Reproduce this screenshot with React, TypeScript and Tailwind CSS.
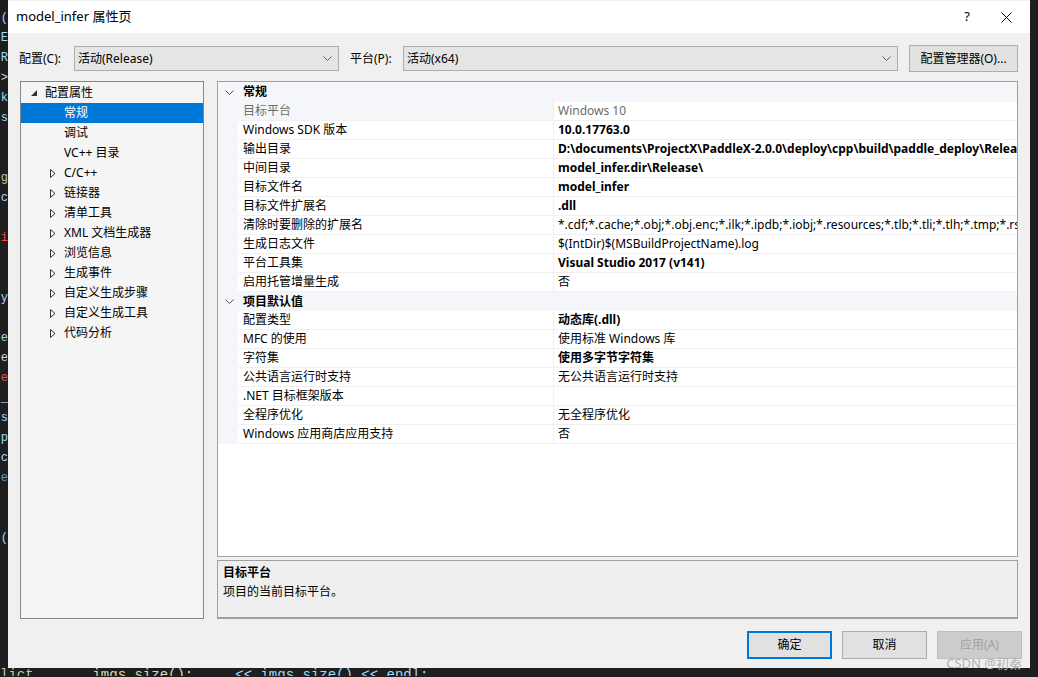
import React from "react";

const FONT = { fontFamily: '"Noto Sans", "Noto Sans CJK SC", sans-serif' };

type Prop = { label: string; value: string; bold?: boolean; disabled?: boolean; selected?: boolean };

const general: Prop[] = [
	{ label: "目标平台", value: "Windows 10", disabled: true, selected: true },
	{ label: "Windows SDK 版本", value: "10.0.17763.0", bold: true },
	{ label: "输出目录", value: "D:\\documents\\ProjectX\\PaddleX-2.0.0\\deploy\\cpp\\build\\paddle_deploy\\Release\\", bold: true },
	{ label: "中间目录", value: "model_infer.dir\\Release\\", bold: true },
	{ label: "目标文件名", value: "model_infer", bold: true },
	{ label: "目标文件扩展名", value: ".dll", bold: true },
	{ label: "清除时要删除的扩展名", value: "*.cdf;*.cache;*.obj;*.obj.enc;*.ilk;*.ipdb;*.iobj;*.resources;*.tlb;*.tli;*.tlh;*.tmp;*.rsp;*.pgc;*.pgd" },
	{ label: "生成日志文件", value: "$(IntDir)$(MSBuildProjectName).log" },
	{ label: "平台工具集", value: "Visual Studio 2017 (v141)", bold: true },
	{ label: "启用托管增量生成", value: "否" },
];

const defaults: Prop[] = [
	{ label: "配置类型", value: "动态库(.dll)", bold: true },
	{ label: "MFC 的使用", value: "使用标准 Windows 库" },
	{ label: "字符集", value: "使用多字节字符集", bold: true },
	{ label: "公共语言运行时支持", value: "无公共语言运行时支持" },
	{ label: ".NET 目标框架版本", value: "" },
	{ label: "全程序优化", value: "无全程序优化" },
	{ label: "Windows 应用商店应用支持", value: "否" },
];

const treeChildren: { label: string; expandable: boolean; selected?: boolean }[] = [
	{ label: "常规", expandable: false, selected: true },
	{ label: "调试", expandable: false },
	{ label: "VC++ 目录", expandable: false },
	{ label: "C/C++", expandable: true },
	{ label: "链接器", expandable: true },
	{ label: "清单工具", expandable: true },
	{ label: "XML 文档生成器", expandable: true },
	{ label: "浏览信息", expandable: true },
	{ label: "生成事件", expandable: true },
	{ label: "自定义生成步骤", expandable: true },
	{ label: "自定义生成工具", expandable: true },
	{ label: "代码分析", expandable: true },
];

function Chevron({ color = "#606060" }: { color?: string }) {
	return (
		<svg width="9" height="5" viewBox="0 0 9 5" className="shrink-0">
			<path d="M0.5 0.5 L4.5 4.5 L8.5 0.5" fill="none" stroke={color} strokeWidth="1" />
		</svg>
	);
}

function Select({ value, width }: { value: string; width: string }) {
	return (
		<div className={`${width} h-[25px] border border-[#adadad] bg-[#e5e5e5] flex items-center pl-[3px] pr-[6px]`}>
			<span className="flex-1 text-[12px] text-black">{value}</span>
			<Chevron />
		</div>
	);
}

function Category({ title, tall }: { title: string; tall?: boolean }) {
	return (
		<div className={`flex ${tall ? "h-[20px]" : "h-[19px]"} bg-[#f4f6f9] items-center shrink-0`}>
			<div className="w-[20px] flex justify-center pl-[2px]">
				<Chevron color="#555555" />
			</div>
			<span className="pl-[5px] text-[12px] font-bold text-black">{title}</span>
		</div>
	);
}

function Row({ p }: { p: Prop }) {
	return (
		<div className="flex h-[19px] shrink-0">
			<div className="w-[20px] bg-[#f4f6f9] shrink-0" />
			<div
				className={`w-[316px] shrink-0 border-b border-r border-[#f0f0f0] pl-[5px] flex items-center text-[12px] whitespace-nowrap ${
					p.selected ? "bg-[#f4f6f9]" : "bg-white"
				} ${p.disabled ? "text-[#6d6d6d]" : "text-black"}`}
			>
				{p.label}
			</div>
			<div
				className={`flex-1 min-w-0 overflow-hidden border-b border-[#f0f0f0] pl-[4px] flex items-center text-[12px] whitespace-nowrap bg-white ${
					p.disabled ? "text-[#6d6d6d]" : "text-black"
				} ${p.bold ? "font-bold" : ""}`}
			>
				{p.value}
			</div>
		</div>
	);
}

function Button({ label, variant }: { label: string; variant: "default" | "normal" | "disabled" }) {
	const cls =
		variant === "default"
			? "border-2 border-[#0078d7] bg-[#e1e1e1] text-black"
			: variant === "normal"
			? "border border-[#adadad] bg-[#e1e1e1] text-black"
			: "border border-[#bfbfbf] bg-[#cccccc] text-[#a0a0a0]";
	return <div className={`w-[85px] h-[28px] flex items-center justify-center text-[12px] ${cls}`}>{label}</div>;
}

const leftCode = [
	{ t: "(", c: "#9cdcfe" },
	{ t: "E", c: "#9cdcfe" },
	{ t: "R", c: "#9cdcfe" },
	{ t: ">", c: "#d4d4d4" },
	{ t: "k", c: "#9cdcfe" },
	{ t: "s", c: "#9cdcfe" },
	{ t: "", c: "" },
	{ t: "", c: "" },
	{ t: "g", c: "#b5cea8" },
	{ t: "c", c: "#9cdcfe" },
	{ t: "", c: "" },
	{ t: "i", c: "#f44747" },
	{ t: "", c: "" },
	{ t: "", c: "" },
	{ t: "y", c: "#9cdcfe" },
	{ t: "", c: "" },
	{ t: "e", c: "#9cdcfe" },
	{ t: "e", c: "#d4d4d4" },
	{ t: "e", c: "#f44747" },
	{ t: "_", c: "#d4d4d4" },
	{ t: "s", c: "#9cdcfe" },
	{ t: "p", c: "#9cdcfe" },
	{ t: "c", c: "#9cdcfe" },
	{ t: "e", c: "#569cd6" },
	{ t: "", c: "" },
	{ t: "", c: "" },
	{ t: "(", c: "#9cdcfe" },
];

export default function App() {
	return (
		<div className="w-[1038px] h-[677px] bg-[#1e1e1e] overflow-hidden relative flex flex-col" style={FONT}>
			<div className="flex h-[668px] shrink-0">
				{/* editor peeking out on the left */}
				<div className="w-[8px] shrink-0 overflow-hidden flex flex-col items-end pt-[8px] text-[12px] leading-[20px] font-mono">
					{leftCode.map((l, i) => (
						<span key={i} className="h-[20px] whitespace-nowrap" style={{ color: l.c }}>
							{l.t}
						</span>
					))}
				</div>

				{/* dialog */}
				<div className="w-[1022px] shrink-0 bg-[#f0f0f0] flex flex-col min-w-0">
					{/* title bar */}
					<div className="h-[32px] mt-[1px] bg-white flex items-center pl-[8px]">
						<span className="flex-1 text-[13px] text-black">model_infer 属性页</span>
						<span className="w-[20px] text-center text-[13px] text-black mr-[24px]">?</span>
						<svg width="11" height="11" viewBox="0 0 11 11" className="mr-[18px]">
							<path d="M0.5 0.5 L10.5 10.5 M10.5 0.5 L0.5 10.5" stroke="#000" strokeWidth="1" />
						</svg>
					</div>

					{/* configuration toolbar */}
					<div className="flex items-center h-[27px] mt-[12px] pl-[11px] pr-[12px]">
						<span className="text-[12px] text-black w-[55px]">配置(C):</span>
						<Select value="活动(Release)" width="w-[265px]" />
						<span className="text-[12px] text-black ml-[11px] w-[53px]">平台(P):</span>
						<Select value="活动(x64)" width="w-[495px]" />
						<div className="ml-[11px] flex-1 h-[27px] border border-[#adadad] bg-[#e1e1e1] flex items-center justify-center text-[12px] text-black">
							配置管理器(O)...
						</div>
					</div>

					{/* main area */}
					<div className="flex mt-[9px] px-[12px] h-[538px] gap-[13px]">
						{/* tree */}
						<div className="w-[184px] shrink-0 border border-[#828790] bg-[#f5f5f5] pt-[1px]">
							<div className="h-[20px] flex items-center text-[12px] text-black">
								<svg width="8" height="8" viewBox="0 0 8 8" className="ml-[9px] mr-[7px]">
									<path d="M7 1 L7 7 L1 7 Z" fill="#333" />
								</svg>
								配置属性
							</div>
							{treeChildren.map((c) => (
								<div
									key={c.label}
									className={`h-[20px] flex items-center text-[12px] ${c.selected ? "bg-[#0078d7] text-white" : "text-black"}`}
								>
									<div className="w-[43px] flex justify-end pr-[8px]">
										{c.expandable && (
											<svg width="6" height="9" viewBox="0 0 6 9">
												<path d="M0.5 0.5 L5 4.5 L0.5 8.5 Z" fill="none" stroke="#333" strokeWidth="1" />
											</svg>
										)}
									</div>
									{c.label}
								</div>
							))}
						</div>

						{/* property grid + description */}
						<div className="flex-1 min-w-0 flex flex-col gap-[3px]">
							<div className="h-[476px] border border-[#a0a0a0] bg-white flex flex-col overflow-hidden">
								<Category title="常规" tall />
								{general.map((p) => (
									<Row key={p.label} p={p} />
								))}
								<Category title="项目默认值" />
								{defaults.map((p) => (
									<Row key={p.label} p={p} />
								))}
							</div>
							<div className="flex-1 border border-[#a0a0a0] border-b-2 bg-[#efefef] px-[5px] pt-[2px] text-[12px] text-black leading-[19px]">
								<div className="font-bold">目标平台</div>
								<div>项目的当前目标平台。</div>
							</div>
						</div>
					</div>

					{/* dialog buttons */}
					<div className="flex justify-end gap-[10px] mt-[12px] pr-[8px]">
						<Button label="确定" variant="default" />
						<Button label="取消" variant="normal" />
						<Button label="应用(A)" variant="disabled" />
					</div>
				</div>

				<div className="flex-1" />
			</div>

			{/* editor line under the dialog */}
			<div className="h-[9px] overflow-hidden whitespace-pre font-mono text-[14px] leading-[16px] -mt-[1px] text-[#b5cea8]">
				{"lict       "}
				<span className="text-[#dcdcaa]">imgs.size();</span>
				{"     "}
				<span className="text-[#9cdcfe]">{"<< imgs.size() << endl;"}</span>
			</div>

			<span className="absolute right-[16px] bottom-[7px] text-[13px] leading-[14px] text-[#b0b0b0]">CSDN @初秦</span>
		</div>
	);
}
